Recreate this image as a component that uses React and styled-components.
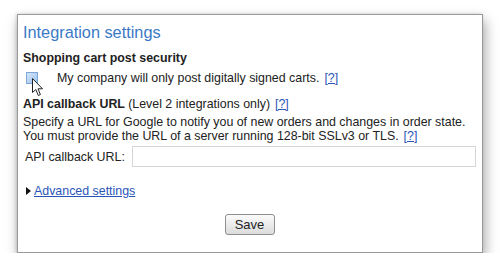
import React from "react";
import styled, { createGlobalStyle } from "styled-components";

const GlobalStyle = createGlobalStyle`
	body {
		margin: 0;
		background: #fff;
		font-family: "Liberation Sans", Arial, sans-serif;
		color: #222;
	}
`;

const Page = styled.div`
	padding: 14px 0 0 17px;
`;

const Panel = styled.div`
	position: relative;
	box-sizing: border-box;
	width: 466px;
	height: 239px;
	border: 1px solid #9a9a9a;
	background: #fff;
	box-shadow: 2px 6px 12px rgba(0, 0, 0, 0.35), -1px 0 3px rgba(0, 0, 0, 0.15);
	padding: 7px 6px 0 5px;
	font-size: 12.4px;
`;

const Title = styled.h2`
	margin: 0 0 8px;
	font-size: 16.3px;
	font-weight: normal;
	line-height: 20px;
	color: #3b79c6;
`;

const Heading = styled.div`
	font-weight: bold;
	line-height: 16px;
	span {
		font-weight: normal;
	}
`;

const CheckRow = styled.label`
	display: flex;
	align-items: center;
	height: 20px;
	margin: 2px 0 8px;
	padding-left: 3px;
`;

const Box = styled.span`
	box-sizing: border-box;
	width: 12px;
	height: 12px;
	border: 1px solid #7ea7d8;
	background: linear-gradient(135deg, #d4e6fb, #9cc2ee);
	margin-right: 19px;
`;

const Help = styled.a`
	color: #2a55b8;
	font-weight: normal;
	text-decoration: underline;
	margin-left: 5px;
`;

const Desc = styled.p`
	margin: 3px 0 0;
	line-height: 14px;
`;

const FieldRow = styled.div`
	display: flex;
	align-items: center;
	gap: 7px;
	margin-top: 3px;
	padding-left: 2px;
`;

const Input = styled.input`
	box-sizing: border-box;
	flex: 1;
	height: 21px;
	border: 1px solid #d6d6d6;
	background: #fff;
	outline: none;
`;

const Toggle = styled.div`
	display: flex;
	align-items: center;
	margin-top: 16px;
	padding-left: 3px;
	line-height: 16px;
	a {
		color: #2a55b8;
		text-decoration: underline;
	}
`;

const Arrow = styled.span`
	width: 0;
	height: 0;
	border-top: 4px solid transparent;
	border-bottom: 4px solid transparent;
	border-left: 5px solid #111;
	margin-right: 3px;
`;

const Actions = styled.div`
	display: flex;
	justify-content: center;
	margin-top: 15px;
`;

const Button = styled.button`
	box-sizing: border-box;
	width: 50px;
	height: 21px;
	border: 1px solid #8e8e8e;
	border-radius: 3px;
	background: linear-gradient(#fbfbfb, #dcdcdc);
	font-family: "Liberation Sans", Arial, sans-serif;
	font-size: 13px;
	color: #222;
	padding: 0;
`;

const Cursor = styled.svg`
	position: absolute;
	left: 14px;
	top: 63px;
`;

export default function App() {
	return (
		<Page>
			<GlobalStyle />
			<Panel>
				<Title>Integration settings</Title>
				<Heading>Shopping cart post security</Heading>
				<CheckRow>
					<Box />
					My company will only post digitally signed carts.
					<Help href="#">[?]</Help>
				</CheckRow>
				<Heading>
					API callback URL <span>(Level 2 integrations only)</span>
					<Help href="#">[?]</Help>
				</Heading>
				<Desc>
					Specify a URL for Google to notify you of new orders and changes in order state.
					<br />
					You must provide the URL of a server running 128-bit SSLv3 or TLS.
					<Help href="#">[?]</Help>
				</Desc>
				<FieldRow>
					API callback URL:
					<Input type="text" />
				</FieldRow>
				<Toggle>
					<Arrow />
					<a href="#">Advanced settings</a>
				</Toggle>
				<Actions>
					<Button>Save</Button>
				</Actions>
				<Cursor width="12" height="19" viewBox="0 0 12 19">
					<path
						d="M0.5 0.5 L0.5 14.5 L3.8 11.5 L6.3 17.5 L8.4 16.6 L6 10.8 L10.5 10.8 Z"
						fill="#fff"
						stroke="#222"
						strokeWidth="1"
						strokeLinejoin="round"
					/>
				</Cursor>
			</Panel>
		</Page>
	);
}
